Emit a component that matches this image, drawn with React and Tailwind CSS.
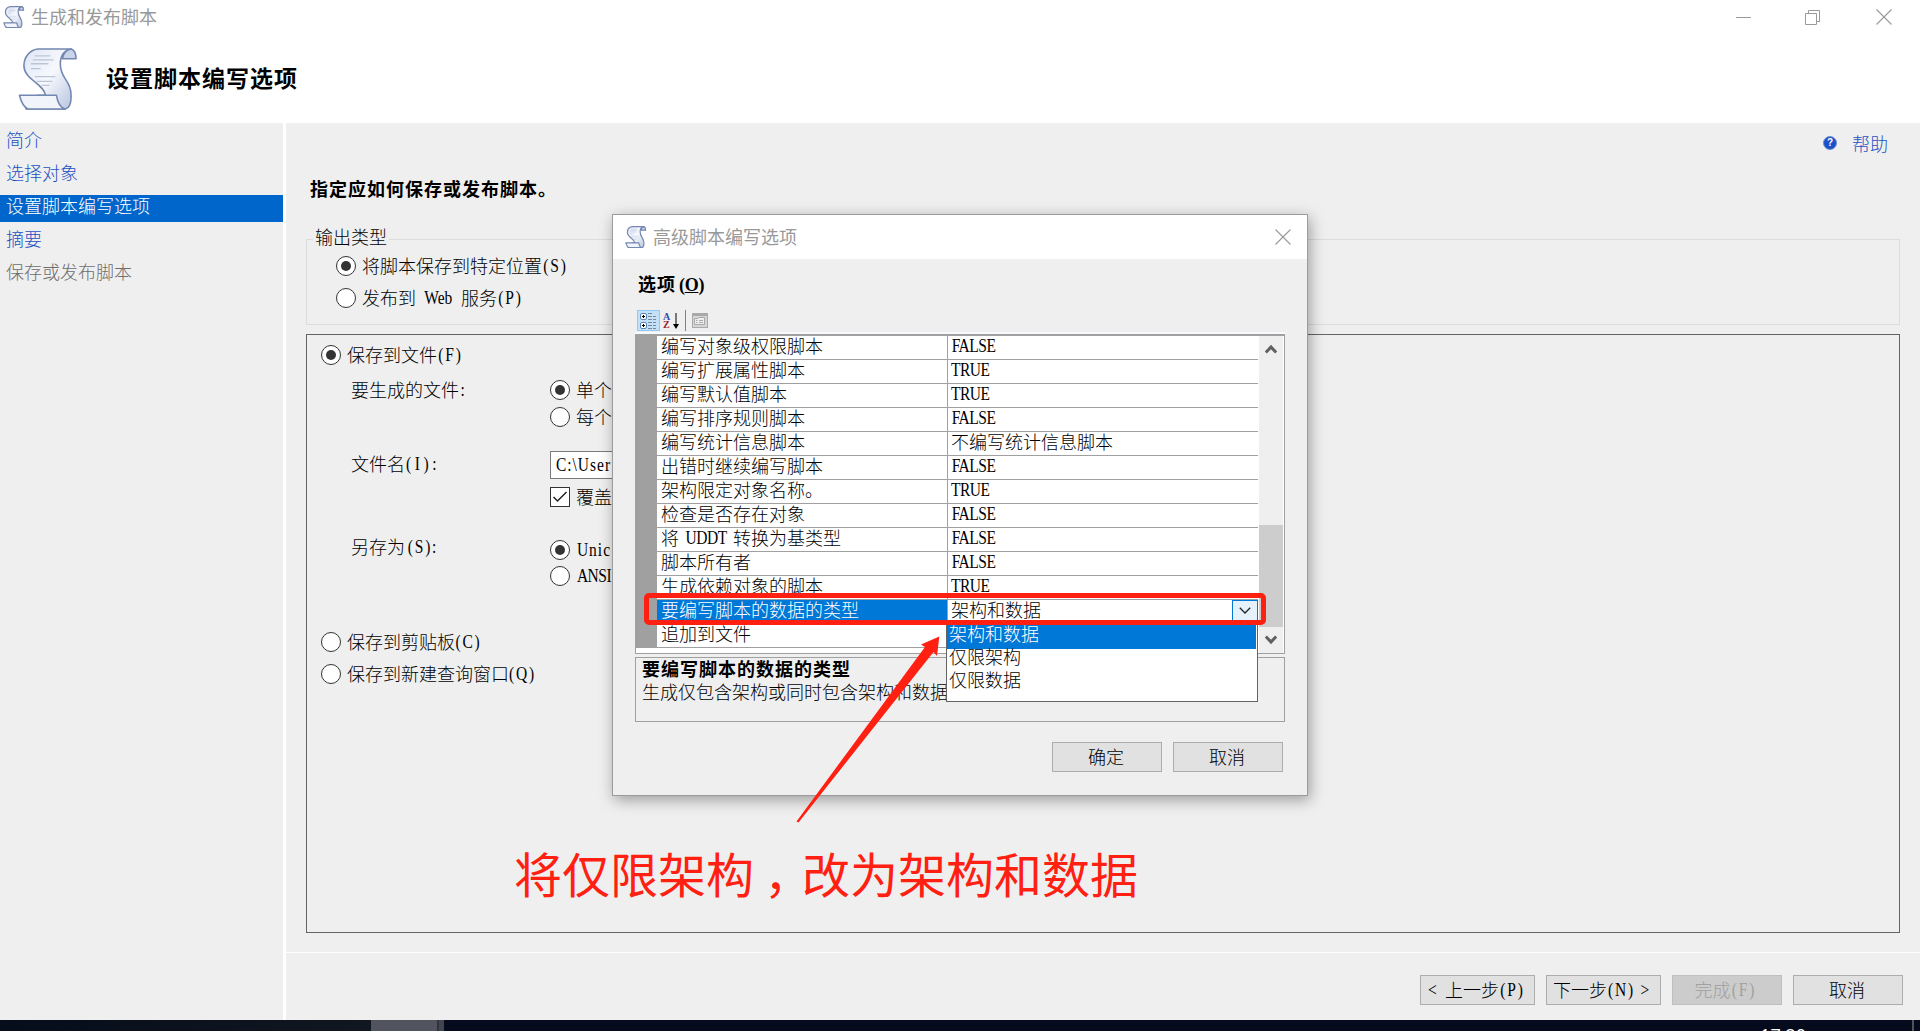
import React from 'react';
import clsx from 'clsx';

const optionRows = [
    { name: '编写对象级权限脚本', value: 'FALSE' },
    { name: '编写扩展属性脚本', value: 'TRUE' },
    { name: '编写默认值脚本', value: 'TRUE' },
    { name: '编写排序规则脚本', value: 'FALSE' },
    { name: '编写统计信息脚本', value: '不编写统计信息脚本' },
    { name: '出错时继续编写脚本', value: 'FALSE' },
    { name: '架构限定对象名称。', value: 'TRUE' },
    { name: '检查是否存在对象', value: 'FALSE' },
    { name: '将 UDDT 转换为基类型', value: 'FALSE' },
    { name: '脚本所有者', value: 'FALSE' },
    { name: '生成依赖对象的脚本', value: 'TRUE' },
    { name: '要编写脚本的数据的类型', value: '架构和数据', selected: true },
    { name: '追加到文件', value: '' },
];

const steps = [
    { label: '简介' },
    { label: '选择对象' },
    { label: '设置脚本编写选项', active: true },
    { label: '摘要' },
    { label: '保存或发布脚本', disabled: true },
];

// letter spacing that brings a Latin run close to the half-width cell
function trackingFor(part) {
    if (/[A-Z]{3}/.test(part)) return 'tracking-[-0.5px]';
    if (part.includes('Web')) return 'tracking-[0px]';
    if (/^[A-Z][a-z]/.test(part) || part.includes('\\')) return 'tracking-[1px]';
    if (part.includes('I')) return 'tracking-[3.6px]';
    return 'tracking-[1.8px]';
}

// Latin runs take half a CJK cell per character and are drawn tall and narrow
function T({ children, className }) {
    const parts = children.match(/[\x20-\x7e]+|[^\x20-\x7e]+/g) || [];
    return (
        <span className={clsx('whitespace-pre', className)}>
            {parts.map((part, i) => {
                if (!/^[\x20-\x7e]/.test(part)) return <span key={i}>{part}</span>;
                return (
                    <span
                        key={i}
                        style={{ width: part.length * 9 }}
                        className={clsx(
                            "inline-block origin-[50%_80%] scale-y-[1.17] text-center align-[1px] font-['Liberation_Serif','Noto_Sans_CJK_SC',serif] text-[15.5px] leading-none",
                            trackingFor(part)
                        )}
                    >
                        {part}
                    </span>
                );
            })}
        </span>
    );
}

function Scroll({ className, stroke = 1.6 }) {
    return (
        <svg viewBox="0 0 62 64" className={className} fill="none">
            <defs>
                <linearGradient id="paper" x1="0" y1="0" x2="1" y2="1">
                    <stop offset="0" stopColor="#dfe6f5" />
                    <stop offset="0.5" stopColor="#f6f8fd" />
                    <stop offset="1" stopColor="#b9c5df" />
                </linearGradient>
            </defs>
            <g stroke="#7487b0" strokeWidth={stroke} strokeLinejoin="round">
                <path d="M20 2H54C47 3 43 9 43 17C43 33 54 33 54 50C54 57 52 62 48 63H8L20 49H28C26 37 6 33 6 19C6 10 12 3 20 2Z" fill="url(#paper)" />
                <path d="M54 2C57 3 59 7 59 12H45C46 6 49 3 54 2Z" fill="#c9d4ea" />
                <path d="M1.500 49H39C40 55 43 62 48 63H10C6 61 3 55 1.500 49Z" fill="#f1f4fb" />
            </g>
            <path d="M17 9H33M15 13H36M13 17H31M13 22H23M17 30H38M19 35H35M24 39H32" stroke="#bcc5d8" strokeWidth="1.300" />
        </svg>
    );
}

function Radio({ checked }) {
    return (
        <span className="flex size-5 shrink-0 items-center justify-center rounded-full border-[1.5px] border-[#333] bg-white">
            {checked && <span className="size-[10px] rounded-full bg-[#333]" />}
        </span>
    );
}

function RadioRow({ checked, label, className }) {
    return (
        <div className={clsx('flex h-5 items-center gap-[6px]', className)}>
            <Radio checked={checked} />
            <T className="pb-[2px]">{label}</T>
        </div>
    );
}

function Button({ children, disabled, className }) {
    return (
        <button
            className={clsx(
                'flex h-[30px] items-center justify-center border pr-[2px] pb-[2px]',
                disabled ? 'border-[#bfbfbf] bg-[#ccc] text-[#a0a0a0]' : 'border-[#adadad] bg-[#e1e1e1]',
                className
            )}
        >
            {children}
        </button>
    );
}

function Cross({ className }) {
    return (
        <svg viewBox="0 0 16 16" className={clsx('size-4', className)} stroke="#999" strokeWidth="1.100">
            <path d="M.5 .5L15.500 15.500M15.500 .5L.5 15.500" />
        </svg>
    );
}

function TitleBar() {
    return (
        <header className="h-[123px] shrink-0 bg-white">
            <div className="flex h-[34px] items-center pl-[3px]">
                <Scroll className="size-[22px]" stroke={3.5} />
                <span className="ml-[6px] pb-[2px] font-normal text-[#999]">生成和发布脚本</span>
                <div className="ml-auto flex items-center pr-[28px]">
                    <span className="h-px w-[15px] bg-[#999]" />
                    <svg viewBox="0 0 15 15" className="ml-[54px] size-[15px]" fill="none" stroke="#999">
                        <path d="M.5 3.500H11.500V14.500H.5ZM3.500 3.500V.5H14.500V11.500H11.500" />
                    </svg>
                    <Cross className="ml-[56px]" />
                </div>
            </div>
            <div className="flex h-[89px] items-start">
                <Scroll className="mt-[13px] ml-[18px] h-[63px] w-[61px]" />
                <h1 className="mt-[26px] ml-[27px] text-[23px] leading-[34px] font-bold tracking-[1px]">设置脚本编写选项</h1>
            </div>
        </header>
    );
}

function Sidebar() {
    return (
        <nav className="flex w-[283px] shrink-0 flex-col gap-[6px] bg-[#efefef] pt-[6px]">
            {steps.map((step) => (
                <div
                    key={step.label}
                    className={clsx(
                        'h-[27px] pl-[6px] leading-[20px]',
                        step.active && 'bg-[#0066cc] text-white',
                        step.disabled && 'text-[#6d6d6d]',
                        !step.active && !step.disabled && 'text-[#1d4fc4]'
                    )}
                >
                    {step.label}
                </div>
            ))}
        </nav>
    );
}

function FileOptions() {
    return (
        <section className="mt-[9px] mr-5 ml-5 h-[599px] border border-[#646464] pt-[10px] pl-[14px]">
            <RadioRow checked label="保存到文件(F)" />
            <div className="mt-[15px] ml-[30px] grid grid-cols-[199px_1fr]">
                <T className="leading-[18px]">要生成的文件:</T>
                <div className="flex flex-col gap-[7px]">
                    <RadioRow checked label="单个" />
                    <RadioRow label="每个" />
                </div>
            </div>
            <div className="mt-6 ml-[30px] grid grid-cols-[199px_1fr]">
                <T className="leading-[24px]">文件名(I):</T>
                <div>
                    <div className="flex h-7 w-[600px] items-center border border-[#7a7a7a] bg-white pb-[3px] pl-px">
                        <T>{'C:\\User'}</T>
                    </div>
                    <div className="mt-2 flex h-5 items-center gap-[6px]">
                        <span className="flex size-5 items-center justify-center border border-[#333] bg-white">
                            <svg viewBox="0 0 16 16" className="size-4" fill="none" stroke="#222" strokeWidth="1.500">
                                <path d="M1.500 8L5.500 12L14.500 3" />
                            </svg>
                        </span>
                        <T className="pb-[2px]">覆盖</T>
                    </div>
                </div>
            </div>
            <div className="mt-[33px] ml-[30px] grid grid-cols-[199px_1fr]">
                <T className="leading-[10px]">另存为(S):</T>
                <div className="flex flex-col gap-[6px]">
                    <RadioRow checked label="Unic" />
                    <RadioRow label="ANSI" />
                </div>
            </div>
            <RadioRow label="保存到剪贴板(C)" className="mt-[46px]" />
            <RadioRow label="保存到新建查询窗口(Q)" className="mt-3" />
        </section>
    );
}

function MainPanel() {
    return (
        <main className="ml-[3px] flex flex-1 flex-col bg-[#efefef]">
            <div className="mt-[10px] flex h-5 items-center justify-end gap-[15px] pr-[32px]">
                <span className="flex size-[14px] items-center justify-center rounded-full border border-[#6f8fce] bg-[#1c50c8] font-['Liberation_Sans',sans-serif] text-[10px] leading-none font-bold text-white">?</span>
                <span className="text-[#1d4fc4]">帮助</span>
            </div>
            <h2 className="mt-[24px] ml-6 h-[26px] leading-[23px] font-bold tracking-[1px]">指定应如何保存或发布脚本。</h2>
            <fieldset className="mt-[24px] mr-5 ml-5 h-[98px] border border-[#dcdcdc] px-[6px]">
                <legend className="h-[25px] px-[2px] leading-[19px]">输出类型</legend>
                <div className="mt-[4px] ml-[23px] flex flex-col gap-3">
                    <RadioRow checked label="将脚本保存到特定位置(S)" />
                    <RadioRow label="发布到 Web 服务(P)" />
                </div>
            </fieldset>
            <FileOptions />
            <footer className="mt-[19px] flex flex-1 items-start justify-end gap-[11px] border-t border-white pt-[22px] pr-[17px]">
                <Button className="w-[115px]"><T>{'< 上一步(P)'}</T></Button>
                <Button className="w-[115px]"><T>{'下一步(N) >'}</T></Button>
                <Button className="w-[110px]" disabled><T>完成(F)</T></Button>
                <Button className="w-[110px]">取消</Button>
            </footer>
        </main>
    );
}

function Toolbar() {
    return (
        <div className="mt-[12px] ml-[24px] flex h-[21px] items-center">
            <span className="flex h-[21px] w-[23px] items-center justify-center border border-[#90c8f6] bg-[#c2e0f7]">
                <svg viewBox="0 0 18 18" className="size-[18px]" fill="none">
                    <rect x=".5" y="1.500" width="6" height="6" rx="1.500" fill="#fff" stroke="#5b83b8" />
                    <rect x=".5" y="10.500" width="6" height="6" rx="1.500" fill="#fff" stroke="#5b83b8" />
                    <path d="M2 4.500H5M3.500 3V6M2 13.500H5M3.500 12V15" stroke="#000" />
                    <path d="M8 1.500H12M8 4.500H12M8 7.500H12M8 10.500H12M8 13.500H12M8 16.500H12M13 4.500H16M13 7.500H16M13 10.500H16M13 13.500H16M13 16.500H16" stroke="#7a8798" />
                </svg>
            </span>
            <span className="ml-[3px] flex w-[7px] flex-col font-['Liberation_Serif',serif] text-[10px] leading-[8px] font-bold">
                <span className="text-[#2a4db0]">A</span>
                <span className="text-[#9a2030]">Z</span>
            </span>
            <svg viewBox="0 0 6 16" className="ml-[3px] h-4 w-[6px]">
                <path d="M2.500 0H3.500V11H6L3 16L0 11H2.500Z" />
            </svg>
            <span className="mr-[6px] ml-[6px] h-[21px] w-px bg-[#808080]" />
            <svg viewBox="0 0 16 15" className="h-[15px] w-4" fill="none" stroke="#a9a9a9">
                <rect x=".5" y=".5" width="15" height="14" fill="#d6d6d6" />
                <path d="M1 2H15" strokeWidth="2" />
                <path d="M2.500 11.500V5.500H6L7 4.500H12.500V11.500ZM4 7.500H5.500M4 9.500H5.500M7 7.500H11M7 9.500H11" fill="#eee" />
            </svg>
        </div>
    );
}

function OptionGrid() {
    return (
        <div className="mt-px mr-[22px] ml-[22px] border-t-2 border-[#f7f9fc]">
            <div className="flex h-[320px] border border-t-2 border-[#a0a0a0] bg-white">
                <div className="h-[312px] w-[21px] shrink-0 bg-[#a0a0a0]" />
                <div className="w-[601px]">
                    {optionRows.map((row) => (
                        <div key={row.name} className="flex h-6 border-b border-[#a0a0a0] leading-[18px]">
                            <div className={clsx('w-[290px] pl-[4px]', row.selected && 'bg-[#0078d7] text-white')}>
                                <T>{row.name}</T>
                            </div>
                            <div className="flex flex-1 justify-between border-l border-[#a0a0a0] pl-[3px]">
                                <T>{row.value}</T>
                                {row.selected && (
                                    <span className="flex h-[22px] w-[26px] items-center justify-center border border-[#0078d7] bg-[#e5f1fb]">
                                        <svg viewBox="0 0 12 7" className="mr-px mb-px h-[7px] w-3" fill="none" stroke="#222" strokeWidth="1.300">
                                            <path d="M.8 .8L6 6L11.200 .8" />
                                        </svg>
                                    </span>
                                )}
                            </div>
                        </div>
                    ))}
                </div>
                <div className="ml-px flex w-6 flex-col items-center bg-[#efefef]">
                    <svg viewBox="0 0 12 10" className="mt-[8px] h-[10px] w-3" fill="none" stroke="#606060" strokeWidth="3">
                        <path d="M.8 8.500L6 3L11.200 8.500" />
                    </svg>
                    <div className="mt-[171px] h-[102px] w-full bg-[#cdcdcd]" />
                    <svg viewBox="0 0 12 10" className="mt-[8px] h-[10px] w-3" fill="none" stroke="#606060" strokeWidth="3">
                        <path d="M.8 1.500L6 7L11.200 1.500" />
                    </svg>
                </div>
            </div>
        </div>
    );
}

function AdvancedDialog() {
    return (
        <div className="absolute top-[214px] left-[612px] flex h-[582px] w-[696px] flex-col border border-[#9b9b9b] bg-[#efefef] shadow-[2px_4px_14px_rgba(0,0,0,0.35)]">
            <div className="flex h-11 shrink-0 items-center bg-white pr-4 pl-3">
                <Scroll className="size-[22px]" stroke={3.5} />
                <span className="ml-[6px] pb-[2px] font-normal text-[#999]">高级脚本编写选项</span>
                <Cross className="ml-auto" />
            </div>
            <div className="mt-[13px] ml-[25px] h-[26px] leading-[22px] font-bold tracking-[1px]">
                选项<span className="pl-[3px] font-['Liberation_Serif',serif] text-[18px] tracking-[-0.3px]">(<u>O</u>)</span>
            </div>
            <Toolbar />
            <OptionGrid />
            <div className="mt-[3px] mr-[22px] ml-[22px] h-[65px] border border-[#a0a0a0] pl-[6px]">
                <div className="leading-[20px] font-bold tracking-[1px]">要编写脚本的数据的类型</div>
                <div className="pt-px leading-[24px]">生成仅包含架构或同时包含架构和数据</div>
            </div>
            <div className="mt-5 mr-6 flex justify-end gap-[11px]">
                <Button className="w-[110px]">确定</Button>
                <Button className="w-[110px]">取消</Button>
            </div>
            {/* open list of the data type combo */}
            <div className="absolute top-[409px] left-[333px] h-[78px] w-[312px] border border-[#646464] bg-white">
                <div className="mr-px h-6 bg-[#0078d7] pl-[2px] leading-[17px] text-white">架构和数据</div>
                <div className="h-[23px] pl-[2px] leading-[15px]">仅限架构</div>
                <div className="h-[23px] pl-[2px] leading-[15px]">仅限数据</div>
            </div>
        </div>
    );
}

function Annotation() {
    return (
        <>
            <div className="absolute top-[593px] left-[644px] h-[32px] w-[622px] rounded-[5px] border-[5px] border-[#ff2012]" />
            <svg viewBox="0 0 160 200" className="absolute top-[630px] left-[790px] h-[200px] w-[160px]" fill="#ff2012">
                <path d="M149.300 6.500L131 14.500L135 17L6.500 191.500L8.500 192.500L143.500 22L147 26Z" />
            </svg>
            <div className="absolute top-[837px] left-[514px] text-[48px] leading-[70px] font-normal whitespace-nowrap text-[#ff2012]">
                将仅限架构<span className="inline-block w-12 indent-[10px]">，</span>改为架构和数据
            </div>
        </>
    );
}

function App() {
    return (
        <div className="relative flex h-[1031px] w-[1920px] flex-col overflow-hidden bg-white font-['Noto_Sans_CJK_SC',sans-serif] text-[18px] leading-[22px] font-light text-black">
            <TitleBar />
            <div className="flex h-[897px] shrink-0">
                <Sidebar />
                <MainPanel />
            </div>
            <div className="flex h-[11px] overflow-hidden bg-[#050b1c]">
                <div className="w-[371px] bg-linear-to-r from-[#060d1b] to-[#111720]" />
                <div className="w-[66px] bg-[#51545f]" />
                <div className="w-[2px] bg-[#30333f]" />
                <div className="w-[5px] bg-[#43464f]" />
                <div className="ml-auto pt-[6px] font-['Open_Sans',sans-serif] text-[18px] leading-[18px] font-normal text-white">17:20</div>
                <div className="mr-[6px] ml-[106px] w-[2px] bg-[#50535c]" />
            </div>
            <AdvancedDialog />
            <Annotation />
        </div>
    );
}

export default App;
